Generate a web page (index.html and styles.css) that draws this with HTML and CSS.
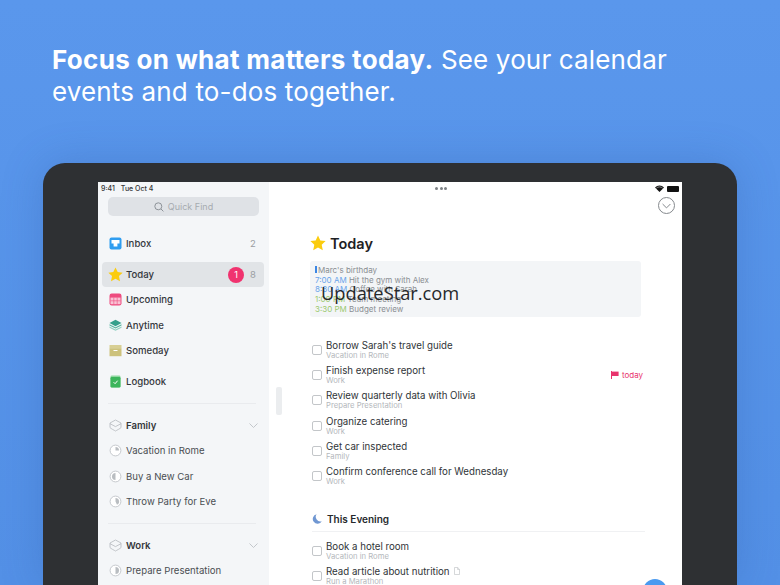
FILE: index.html
```html
<!DOCTYPE html>
<html lang="en">
<head>
<meta charset="UTF-8" />
<title>Things - Today</title>
<link rel="stylesheet" href="styles.css">
</head>
<body>
<h1 class="headline"><b>Focus on what matters today.</b> See your calendar events and to-dos together.</h1>

<div class="device">
  <div class="screen">

    <!-- Sidebar -->
    <aside class="sidebar">
      <div class="clock"><span>9:41</span><span>Tue Oct 4</span></div>
      <div class="search">
        <svg width="10" height="10" viewBox="0 0 10 10"><circle cx="4.3" cy="4.3" r="3.5" fill="none" stroke="#8d9298"/><path d="M7 7l2.4 2.4" stroke="#8d9298"/></svg>
        Quick Find
      </div>

      <div class="row inbox">
        <svg class="icon" viewBox="0 0 13 13"><rect width="12" height="12" x=".5" y=".5" rx="2" fill="#2f9df0"/><path d="M2.5 3h8v3.6H8.4v3H4.6v-3H2.5z" fill="#fff"/></svg>
        <span class="name">Inbox</span><span class="count">2</span>
      </div>
      <div class="row selected">
        <svg class="icon" viewBox="0 0 13 13"><path d="M6.5.4l1.9 4 4.3.5-3.2 3 .9 4.4-3.9-2.2-3.9 2.2.9-4.4-3.2-3 4.3-.5z" fill="#fbcc0e"/></svg>
        <span class="name">Today</span><span class="badge">1</span><span class="count">8</span>
      </div>
      <div class="row">
        <svg class="icon" viewBox="0 0 13 13"><rect width="12" height="12" x=".5" y=".5" rx="2.2" fill="#ee4b7f"/><rect width="10" height="6.6" x="1.5" y="4.6" fill="#f9c3d5"/><path d="M4.8 4.6v6.6M8.2 4.6v6.6M1.5 7.8h10" stroke="#ee4b7f" stroke-width=".6"/></svg>
        <span class="name">Upcoming</span>
      </div>
      <div class="row">
        <svg class="icon" viewBox="0 0 13 13"><path d="M.5 7.4l6 3 6-3v1.4l-6 3-6-3z" fill="#8fd0c0"/><path d="M.5 5.2l6 3 6-3v1.3l-6 3-6-3z" fill="#56b5a0"/><path d="M6.5.8l6 3.2-6 3.2-6-3.2z" fill="#35a08b"/></svg>
        <span class="name">Anytime</span>
      </div>
      <div class="row">
        <svg class="icon" viewBox="0 0 13 13"><rect width="12" height="3.2" x=".5" y="1" fill="#d8cf94"/><rect width="12" height="8" x=".5" y="4.2" fill="#cdc27c"/><rect width="4" height="1" x="4.5" y="6" fill="#fff"/></svg>
        <span class="name">Someday</span>
      </div>
      <div class="row logbook">
        <svg class="icon" viewBox="0 0 13 13"><rect width="10" height="12" x="1.5" y=".5" rx="1.4" fill="#8fd8a0"/><rect width="10" height="10.4" x="1.5" y="2.1" rx="1.2" fill="#3cb55c"/><path d="M4.6 7.2l1.5 1.5 2.5-3" fill="none" stroke="#fff"/></svg>
        <span class="name">Logbook</span>
      </div>

      <div class="divider"></div>

      <div class="row area">
        <svg class="icon" viewBox="0 0 13 13"><path d="M6.5 1l5.5 3v4.6c0 .5-5.5 3.4-5.5 3.4S1 9.100 1 8.600V4zM1 4.700l5.500 2.900L12 4.700" fill="none" stroke="#b4b8bc" stroke-width=".8" stroke-linejoin="round"/></svg>
        <span class="name">Family</span>
        <svg class="chevron" width="9" height="5" viewBox="0 0 9 5"><path d="M.5.5l4 4 4-4" fill="none" stroke="#c3c7cb"/></svg>
      </div>
      <div class="row project">
        <svg class="icon" viewBox="0 0 13 13"><circle cx="6.5" cy="6.5" r="5.4" fill="#fff" stroke="#b9bdc1" stroke-width=".8"/><path d="M6.5 3v3.5H10A3.500 3.500 0 0 0 6.500 3z" fill="#b9bdc1"/></svg>
        <span class="name">Vacation in Rome</span>
      </div>
      <div class="row project">
        <svg class="icon" viewBox="0 0 13 13"><circle cx="6.5" cy="6.5" r="5.4" fill="#fff" stroke="#b9bdc1" stroke-width=".8"/><path d="M6.5 3a3.500 3.500 0 0 1 0 7z" fill="#b9bdc1" transform="rotate(180 6.5 6.5)"/></svg>
        <span class="name">Buy a New Car</span>
      </div>
      <div class="row project">
        <svg class="icon" viewBox="0 0 13 13"><circle cx="6.5" cy="6.5" r="5.4" fill="#fff" stroke="#b9bdc1" stroke-width=".8"/><path d="M6.5 3a3.500 3.500 0 0 1 1.500 6.700L6.500 6.500z" fill="#b9bdc1"/></svg>
        <span class="name">Throw Party for Eve</span>
      </div>

      <div class="divider"></div>

      <div class="row area">
        <svg class="icon" viewBox="0 0 13 13"><path d="M6.5 1l5.5 3v4.6c0 .5-5.5 3.4-5.5 3.4S1 9.100 1 8.600V4zM1 4.700l5.500 2.900L12 4.700" fill="none" stroke="#b4b8bc" stroke-width=".8" stroke-linejoin="round"/></svg>
        <span class="name">Work</span>
        <svg class="chevron" width="9" height="5" viewBox="0 0 9 5"><path d="M.5.5l4 4 4-4" fill="none" stroke="#c3c7cb"/></svg>
      </div>
      <div class="row project">
        <svg class="icon" viewBox="0 0 13 13"><circle cx="6.5" cy="6.5" r="5.4" fill="#fff" stroke="#b9bdc1" stroke-width=".8"/><path d="M6.5 3a3.500 3.500 0 0 1 0 7z" fill="#b9bdc1"/></svg>
        <span class="name">Prepare Presentation</span>
      </div>
    </aside>

    <div class="handle"></div>

    <!-- Main list -->
    <main class="main">
      <div class="topbar">
        <div class="dots"><i></i><i></i><i></i></div>
        <div class="status">
          <svg width="9" height="7" viewBox="0 0 9 7"><path d="M4.5 7L0 2.4a6.4 6.4 0 0 1 9 0z" fill="#111"/><path d="M1.3 3.2a4.6 4.6 0 0 1 6.4 0" fill="none" stroke="#fff" stroke-width=".5"/></svg>
          <div class="battery"></div>
        </div>
      </div>
      <div class="more">
        <svg width="17" height="17" viewBox="0 0 17 17"><circle cx="8.5" cy="8.5" r="8" fill="none" stroke="#85898d"/><path d="M4.6 7l3.9 3.9L12.4 7" fill="none" stroke="#85898d"/></svg>
      </div>

      <h2 class="title">
        <svg width="16" height="16" viewBox="0 0 13 13"><path d="M6.5.4l1.9 4 4.3.5-3.2 3 .9 4.4-3.9-2.2-3.9 2.2.9-4.4-3.2-3 4.3-.5z" fill="#fbcc0e"/></svg>
        Today
      </h2>

      <div class="calendar">
        <div><i class="allday"></i>Marc's birthday</div>
        <div><span class="blue">7:00 AM</span> Hit the gym with Alex</div>
        <div><span class="blue">8:30 AM</span> Coffee with Sarah</div>
        <div><span class="green">1:00 PM</span> Team meeting</div>
        <div><span class="green">3:30 PM</span> Budget review</div>
      </div>

      <ul class="todos">
        <li><span class="box"></span><div class="text"><p>Borrow Sarah's travel guide</p><small>Vacation in Rome</small></div></li>
        <li><span class="box"></span><div class="text"><p>Finish expense report</p><small>Work</small></div>
          <span class="due">
            <svg width="8" height="8" viewBox="0 0 8 8"><path d="M.5 0v8" stroke="#e8336d"/><path d="M1 .6h6.6v4.4H1z" fill="#e8336d"/></svg>
            today
          </span>
        </li>
        <li><span class="box"></span><div class="text"><p>Review quarterly data with Olivia</p><small>Prepare Presentation</small></div></li>
        <li><span class="box"></span><div class="text"><p>Organize catering</p><small>Work</small></div></li>
        <li><span class="box"></span><div class="text"><p>Get car inspected</p><small>Family</small></div></li>
        <li><span class="box"></span><div class="text"><p>Confirm conference call for Wednesday</p><small>Work</small></div></li>
      </ul>

      <h3 class="evening">
        <svg width="10" height="10" viewBox="0 0 10 10"><path d="M4.6.2a4.8 4.8 0 1 0 5.2 7A4.6 4.6 0 0 1 4.6.2z" fill="#7097d2"/></svg>
        This Evening
      </h3>

      <ul class="todos">
        <li><span class="box"></span><div class="text"><p>Book a hotel room</p><small>Vacation in Rome</small></div></li>
        <li><span class="box"></span><div class="text"><p>Read article about nutrition
          <svg class="note" width="6" height="8" viewBox="0 0 6 8"><path d="M.5.5h3.2l1.8 1.8v5.2h-5zM3.6.5v2h1.9" fill="none" stroke="#c4c7ca" stroke-width=".7"/></svg>
        </p><small>Run a Marathon</small></div></li>
      </ul>

      <div class="add"></div>
    </main>
  </div>
</div>

<div class="watermark">UpdateStar.com</div>
</body>
</html>
```

FILE: styles.css
```css
body {
  margin: 0;
  height: 585px;
  overflow: hidden;
  position: relative;
  font-family: Inter, "Liberation Sans", sans-serif;
  background: linear-gradient(180deg, #5a97ec 0%, #5390e6 100%);
}
p, ul, h1, h2, h3 {
  margin: 0;
  padding: 0;
}
ul {
  list-style: none;
}

.headline {
  padding: 44px 100px 0 52px;
  height: 163px;
  box-sizing: border-box;
  font-size: 26px;
  line-height: 32px;
  font-weight: 400;
  letter-spacing: 0.15px;
  color: #fff;
}
.headline b {
  font-weight: 700;
  letter-spacing: 0.3px;
}

.device {
  margin: 0 43px;
  height: 422px;
  padding: 19px 55px 0;
  box-sizing: border-box;
  background: #2e3033;
  border-radius: 22px 22px 0 0;
  box-shadow: 0 0 40px rgba(40,80,150,0.25);
}
.screen {
  display: flex;
  height: 403px;
  overflow: hidden;
  position: relative;
  background: #fff;
}

/* Sidebar */
.sidebar {
  width: 171px;
  flex: none;
  background: #f4f6f8;
  color: #34383c;
  font-size: 9.6px;
}
.clock {
  display: flex;
  gap: 6px;
  height: 15px;
  padding: 2px 0 0 3px;
  box-sizing: border-box;
  font-size: 7px;
  font-weight: 500;
  color: #333;
}
.search {
  display: flex;
  align-items: center;
  justify-content: center;
  gap: 4px;
  height: 19px;
  margin: 0 10px 0 10px;
  border-radius: 5px;
  background: #dfe2e6;
  color: #a6abb0;
  font-size: 9px;
}
.row {
  display: flex;
  align-items: center;
  height: 25.2px;
  padding: 0 13px 0 11px;
  position: relative;
}
.row .icon {
  width: 13px;
  height: 13px;
  margin-right: 4px;
  flex: none;
}
.row .name {
  flex: 1;
  font-weight: 500;
}
.count {
  color: #9a9ea2;
  font-size: 9.5px;
  margin-left: 6px;
  width: 6px;
  text-align: center;
}
.inbox {
  margin-top: 15px;
  margin-bottom: 6px;
}
.selected {
  margin: 0 5px 0 4px;
  padding: 0 8px 0 6px;
  background: #e1e4e7;
  border-radius: 4px;
}
.selected .icon {
  width: 15px;
  height: 15px;
  margin-right: 3px;
}
.badge {
  width: 16px;
  height: 16px;
  line-height: 16px;
  border-radius: 50%;
  background: #f0336f;
  color: #fff;
  text-align: center;
  font-size: 9px;
}
.logbook {
  margin-top: 6px;
}
.divider {
  height: 1px;
  margin: 9px 13px 9px 10px;
  background: #e9ebee;
}
.area .name {
  font-weight: 600;
}
.project .name {
  font-weight: 400;
  color: #4a4e52;
}
.chevron {
  margin-right: -2px;
}

.handle {
  position: absolute;
  left: 178px;
  top: 205px;
  width: 6px;
  height: 28px;
  border-radius: 2px;
  background: #ebedef;
}

/* Main list */
.main {
  flex: 1;
  padding: 0 37px 0 41px;
  position: relative;
  color: #303438;
}
.topbar {
  height: 12px;
  margin: 0 -37px 0 -41px;
  position: relative;
}
.dots {
  display: flex;
  justify-content: center;
  gap: 1.5px;
  padding-top: 4.5px;
  margin-left: -71px;
  padding-left: 2px;
}
.dots i {
  width: 3px;
  height: 3px;
  border-radius: 50%;
  background: #7d8185;
}
.status {
  position: absolute;
  right: 3px;
  top: 3px;
  display: flex;
  align-items: center;
  gap: 3px;
}
.battery {
  width: 12px;
  height: 6px;
  background: #111;
  border-radius: 1px;
  box-shadow: 1px 0 0 -1.5px #777;
}
.more {
  position: absolute;
  top: 15px;
  right: 7px;
  line-height: 0;
}
.title {
  display: flex;
  align-items: center;
  gap: 4px;
  margin: 39px 0 0 0;
  height: 20px;
  font-size: 14.5px;
  font-weight: 600;
  color: #1e2124;
}
.calendar {
  height: 56px;
  margin: 8px 4px 0 0;
  padding: 5px 5px;
  box-sizing: border-box;
  background: #f3f5f7;
  border-radius: 3px;
  font-size: 8px;
  line-height: 9.7px;
  color: #8a8e92;
}
.allday {
  display: inline-block;
  width: 1.5px;
  height: 7px;
  margin-right: 1.5px;
  background: #3b86e4;
}
.blue {
  color: #68a3ea;
}
.green {
  color: #9bc96f;
}

.todos {
  margin-top: 20px;
}
.todos li {
  display: flex;
  align-items: center;
  height: 25.2px;
  padding-left: 2px;
}
.box {
  width: 8px;
  height: 8px;
  flex: none;
  margin: 1px 4px 0 0;
  border: 1px solid #c3c6c9;
  border-radius: 2px;
}
.text {
  flex: 1;
}
.text p {
  font-size: 9.7px;
  line-height: 13px;
}
.text small {
  display: block;
  font-size: 7.7px;
  line-height: 8px;
  color: #b4b8bc;
}
.note {
  margin-left: 2px;
}
.due {
  display: flex;
  align-items: center;
  gap: 3px;
  margin-right: 2px;
  font-size: 8px;
  color: #e8336d;
}
.evening {
  display: flex;
  align-items: center;
  gap: 5px;
  height: 24px;
  margin: 19px 0 0 2px;
  font-size: 10px;
  font-weight: 600;
  color: #26292c;
  border-bottom: 1px solid #f0f1f3;
}
.evening + .todos {
  margin-top: 6px;
}
.add {
  position: absolute;
  right: 15px;
  top: 397px;
  width: 24px;
  height: 24px;
  border-radius: 50%;
  background: #4a9af0;
}

.watermark {
  position: absolute;
  left: 321px;
  top: 279px;
  font-family: "Open Sans", sans-serif;
  font-size: 18.3px;
  line-height: 28px;
  color: #26282b;
}
```
